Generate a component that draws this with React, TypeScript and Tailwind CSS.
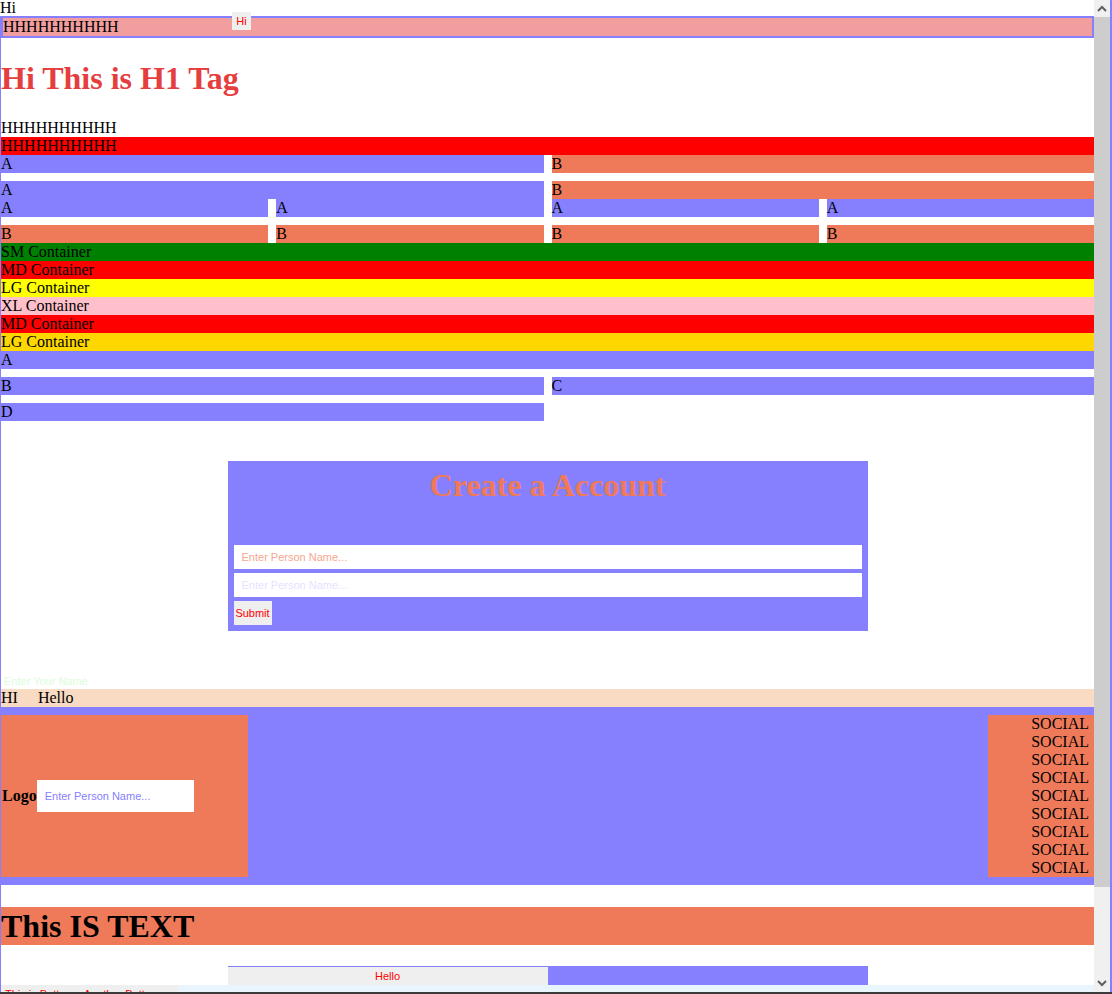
import React from 'react';

const Scrollbar: React.FC = () => (
  <div className="flex w-[18px] shrink-0">
    <div className="flex w-4 flex-col bg-[#f0f0f0]">
      <div className="flex h-[17px] items-center justify-center">
        <svg width="10" height="7" viewBox="0 0 10 7">
          <polyline points="1,6 5,2 9,6" fill="none" stroke="#5f5f5f" strokeWidth="2" />
        </svg>
      </div>
      <div className="h-[870px] bg-[#cdcdcd]" />
      <div className="flex-1" />
      <div className="flex h-[17px] items-center justify-center">
        <svg width="10" height="7" viewBox="0 0 10 7">
          <polyline points="1,1 5,5 9,1" fill="none" stroke="#5f5f5f" strokeWidth="2" />
        </svg>
      </div>
    </div>
    <div className="w-[2px] bg-[#8680ff]" />
  </div>
);

const App: React.FC = () => {
  const socials = Array.from({ length: 9 }, (_, i) => i);

  return (
    <div className="flex h-[994px] w-full flex-col overflow-hidden bg-white font-['Liberation_Serif',serif] text-[16px] leading-[18px] text-black">
      <div className="flex min-h-0 flex-1">
        <main className="min-w-0 flex-1 overflow-hidden">
          <div className="h-4 leading-4">Hi</div>

          <div className="border-l border-[#8680ff]">
            {/* top bar with badge */}
            <div className="relative h-[22px] border-2 border-[#8680ff] bg-[#f29e9e] leading-[18px]">
              HHHHHHHHHH
              <span className="absolute left-[229px] top-[-6px] flex h-[18px] w-[19px] items-center justify-center bg-[#efefef] font-['Liberation_Sans',sans-serif] text-[11px] text-[#ff0000]">
                Hi
              </span>
            </div>

            <h1 className="my-[22px] text-[32px] font-bold leading-[37px] text-[#e53e3e]">Hi This is H1 Tag</h1>

            <div>HHHHHHHHHH</div>
            <div className="bg-[#ff0000]">HHHHHHHHHH</div>

            <div className="grid grid-cols-2 gap-2">
              <div className="bg-[#8680ff]">A</div>
              <div className="bg-[#ef7a5a]">B</div>
              <div className="bg-[#8680ff]">A</div>
              <div className="bg-[#ef7a5a]">B</div>
            </div>
            <div className="grid grid-cols-4 gap-2">
              <div className="bg-[#8680ff]">A</div>
              <div className="bg-[#8680ff]">A</div>
              <div className="bg-[#8680ff]">A</div>
              <div className="bg-[#8680ff]">A</div>
              <div className="bg-[#ef7a5a]">B</div>
              <div className="bg-[#ef7a5a]">B</div>
              <div className="bg-[#ef7a5a]">B</div>
              <div className="bg-[#ef7a5a]">B</div>
            </div>

            <div className="bg-[#008000]">SM Container</div>
            <div className="bg-[#ff0000]">MD Container</div>
            <div className="bg-[#ffff00]">LG Container</div>
            <div className="bg-[#ffc0cb]">XL Container</div>
            <div className="bg-[#ff0000]">MD Container</div>
            <div className="bg-[#ffd700]">LG Container</div>

            <div className="grid grid-cols-2 gap-2">
              <div className="col-span-2 bg-[#8680ff]">A</div>
              <div className="bg-[#8680ff]">B</div>
              <div className="bg-[#8680ff]">C</div>
              <div className="bg-[#8680ff]">D</div>
            </div>

            {/* form */}
            <form className="mx-auto mt-10 w-[640px] bg-[#8680ff] p-[6px]" onSubmit={(e) => e.preventDefault()}>
              <h2 className="mb-[41px] text-center text-[32px] font-bold leading-[37px] text-[#ef7a5a]">Create a Account</h2>
              <div className="flex flex-col gap-1 font-['Liberation_Sans',sans-serif] text-[11px]">
                <input
                  className="h-6 w-full bg-white px-2 outline-none placeholder:text-[#f5a88e]"
                  placeholder="Enter Person Name..."
                />
                <input
                  className="h-6 w-full bg-white px-2 outline-none placeholder:text-[#e4e3ff]"
                  placeholder="Enter Person Name..."
                />
                <button type="submit" className="h-6 w-[38px] bg-[#efefef] text-[#ff0000]">
                  Submit
                </button>
              </div>
            </form>

            <div className="mt-[42px] h-4 pl-[3px] font-['Liberation_Sans',sans-serif] text-[11px] leading-4 text-[#dcfddc]">
              Enter Your Name
            </div>

            <div className="flex gap-5 bg-[#f9dac2]">
              <span>HI</span>
              <span>Hello</span>
            </div>

            {/* header-ish section */}
            <div className="flex justify-between bg-[#8680ff] py-2">
              <div className="flex h-[162px] w-[247px] items-center bg-[#ef7a5a] pl-px">
                <span className="font-bold">Logo</span>
                <input
                  className="h-8 w-[157px] bg-white px-2 font-['Liberation_Sans',sans-serif] text-[11px] outline-none placeholder:text-[#8680ff]"
                  placeholder="Enter Person Name..."
                />
              </div>
              <div className="flex w-[106px] flex-col bg-[#ef7a5a] pr-[5px] text-right">
                {socials.map((i) => (
                  <span key={i}>SOCIAL</span>
                ))}
              </div>
            </div>

            <div className="mt-[22px] h-[38px] bg-[#ef7a5a] text-[32px] font-bold leading-[38px]">This IS TEXT</div>

            <div className="mx-auto mt-[21px] flex h-[19px] w-[640px] font-['Liberation_Sans',sans-serif] text-[11px]">
              <div className="flex flex-1 items-center justify-center border-t border-[#8680ff] bg-[#efefef] text-[#ff0000]">
                Hello
              </div>
              <div className="flex-1 bg-[#8680ff]" />
            </div>

            <div className="flex h-[18px] bg-[#e8f5fd] font-['Liberation_Sans',sans-serif] text-[11px] text-[#ff0000]">
              <div className="flex w-[178px] items-center gap-3 bg-[#efefef] px-1">
                <span>This is Button</span>
                <span>Another Button</span>
              </div>
            </div>
          </div>
        </main>
        <Scrollbar />
      </div>
      <div className="h-[2px] shrink-0 bg-[#3b3b3b]" />
    </div>
  );
};

export default App;
